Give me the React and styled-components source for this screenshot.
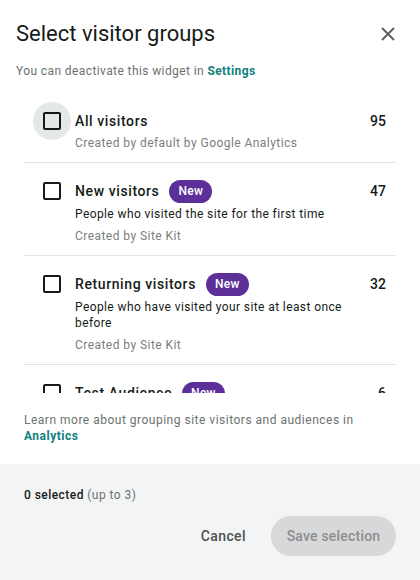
import React from "react";
import styled, { createGlobalStyle } from "styled-components";

const GlobalStyle = createGlobalStyle`
  html, body {
    margin: 0;
    padding: 0;
    background: #ffffff;
  }
  body {
    font-family: Roboto, "Noto Sans", "Liberation Sans", sans-serif;
    color: #161b18;
  }
`;

const Dialog = styled.div`
  width: 420px;
  height: 580px;
  display: flex;
  flex-direction: column;
  background: #ffffff;
  overflow: hidden;
`;

const Header = styled.div`
  padding: 20px 24px 0 16px;
`;

const TitleRow = styled.div`
  display: flex;
  align-items: center;
  justify-content: space-between;
`;

const Title = styled.h2`
  margin: 0;
  font-size: 22px;
  line-height: 28px;
  font-weight: 400;
  color: #161b18;
`;

const CloseButton = styled.button`
  width: 24px;
  height: 24px;
  padding: 0;
  margin-right: -4px;
  border: none;
  background: none;
  display: flex;
  align-items: center;
  justify-content: center;
  cursor: pointer;
`;

const Subtitle = styled.p`
  margin: 14px 0 0;
  font-size: 12px;
  line-height: 18px;
  color: #6c726e;
  letter-spacing: 0.4px;
`;

const Link = styled.a`
  color: #108080;
  font-weight: 700;
  text-decoration: none;
`;

const List = styled.div`
  margin: 13px 24px 0;
  height: 300px;
  overflow: hidden;
`;

const Item = styled.div`
  display: flex;
  padding: 16px 10px 11px 19px;
  border-bottom: 1px solid #e1e4e6;
`;

const CheckWrap = styled.div`
  position: relative;
  width: 18px;
  height: 24px;
  flex-shrink: 0;
  display: flex;
  align-items: center;
  margin-right: 14px;
`;

const Halo = styled.span`
  position: absolute;
  left: -10px;
  top: -7px;
  width: 38px;
  height: 38px;
  border-radius: 50%;
  background: #e4e9e6;
`;

const Box = styled.span`
  position: relative;
  width: 14px;
  height: 14px;
  border: 2px solid #161b18;
  border-radius: 2px;
`;

const Body = styled.div`
  flex: 1;
  min-width: 0;
`;

const Row = styled.div`
  display: flex;
  align-items: center;
  min-height: 24px;
`;

const Label = styled.span`
  font-size: 14px;
  line-height: 20px;
  font-weight: 500;
  letter-spacing: 0.6px;
  color: #161b18;
`;

const Badge = styled.span`
  margin-left: 10px;
  height: 23px;
  padding: 0 9px;
  border-radius: 12px;
  background: #5c2f99;
  color: #ffffff;
  font-size: 12px;
  font-weight: 500;
  letter-spacing: 0.3px;
  display: inline-flex;
  align-items: center;
`;

const Count = styled.span`
  margin-left: auto;
  font-size: 14px;
  font-weight: 500;
  color: #161b18;
`;

const Description = styled.div`
  margin-top: 3px;
  font-size: 12px;
  line-height: 16px;
  color: #161b18;
  letter-spacing: 0.4px;
  padding-right: 30px;
`;

const Meta = styled.div`
  margin-top: ${(p) => (p.$afterDesc ? "6px" : "2px")};
  font-size: 12px;
  line-height: 16px;
  color: #7a807c;
  letter-spacing: 0.45px;
`;

const LearnMore = styled.p`
  margin: 19px 24px 20px;
  font-size: 12px;
  line-height: 16px;
  color: #6c726e;
  letter-spacing: 0.5px;
`;

const Footer = styled.div`
  flex: 1;
  background: #f3f4f6;
  padding: 23px 24px 24px;
  display: flex;
  flex-direction: column;
`;

const Selected = styled.div`
  font-size: 12px;
  line-height: 16px;
  color: #161b18;
  font-weight: 500;
  letter-spacing: 0.45px;
`;

const Limit = styled.span`
  font-weight: 400;
  color: #6c726e;
`;

const Actions = styled.div`
  margin-top: 13px;
  display: flex;
  justify-content: flex-end;
  align-items: center;
  gap: 13px;
`;

const TextButton = styled.button`
  border: none;
  background: none;
  padding: 0 12px;
  height: 40px;
  font-family: inherit;
  font-size: 14px;
  font-weight: 500;
  letter-spacing: 0.4px;
  color: #4d524f;
  cursor: pointer;
`;

const SaveButton = styled.button`
  width: 125px;
  height: 40px;
  border: none;
  border-radius: 20px;
  background: #d7d8d9;
  color: #8c8e8f;
  font-family: inherit;
  font-size: 14px;
  font-weight: 500;
  letter-spacing: 0.2px;
`;

const groups = [
  { id: 1, name: "All visitors", count: 95, meta: "Created by default by Google Analytics", hover: true },
  { id: 2, name: "New visitors", count: 47, isNew: true, desc: "People who visited the site for the first time", meta: "Created by Site Kit" },
  { id: 3, name: "Returning visitors", count: 32, isNew: true, desc: "People who have visited your site at least once before", meta: "Created by Site Kit" },
  { id: 4, name: "Test Audience", count: 6, isNew: true, desc: "A test audience", meta: "Already exists in your Analytics property" },
];

const CloseIcon = () => (
  <svg width="16" height="16" viewBox="0 0 16 16">
    <path d="M2 2L14 14M14 2L2 14" stroke="#5f6360" strokeWidth="2" />
  </svg>
);

export default function App() {
  return (
    <>
      <GlobalStyle />
      <Dialog>
        <Header>
          <TitleRow>
            <Title>Select visitor groups</Title>
            <CloseButton aria-label="Close">
              <CloseIcon />
            </CloseButton>
          </TitleRow>
          <Subtitle>
            You can deactivate this widget in <Link href="#">Settings</Link>
          </Subtitle>
        </Header>
        <List>
          {groups.map((g) => (
            <Item key={g.id}>
              <CheckWrap>
                {g.hover && <Halo />}
                <Box />
              </CheckWrap>
              <Body>
                <Row>
                  <Label>{g.name}</Label>
                  {g.isNew && <Badge>New</Badge>}
                  <Count>{g.count}</Count>
                </Row>
                {g.desc && <Description>{g.desc}</Description>}
                <Meta $afterDesc={!!g.desc}>{g.meta}</Meta>
              </Body>
            </Item>
          ))}
        </List>
        <LearnMore>
          Learn more about grouping site visitors and audiences in
          <br />
          <Link href="#">Analytics</Link>
        </LearnMore>
        <Footer>
          <Selected>
            0 selected <Limit>(up to 3)</Limit>
          </Selected>
          <Actions>
            <TextButton>Cancel</TextButton>
            <SaveButton disabled>Save selection</SaveButton>
          </Actions>
        </Footer>
      </Dialog>
    </>
  );
}
